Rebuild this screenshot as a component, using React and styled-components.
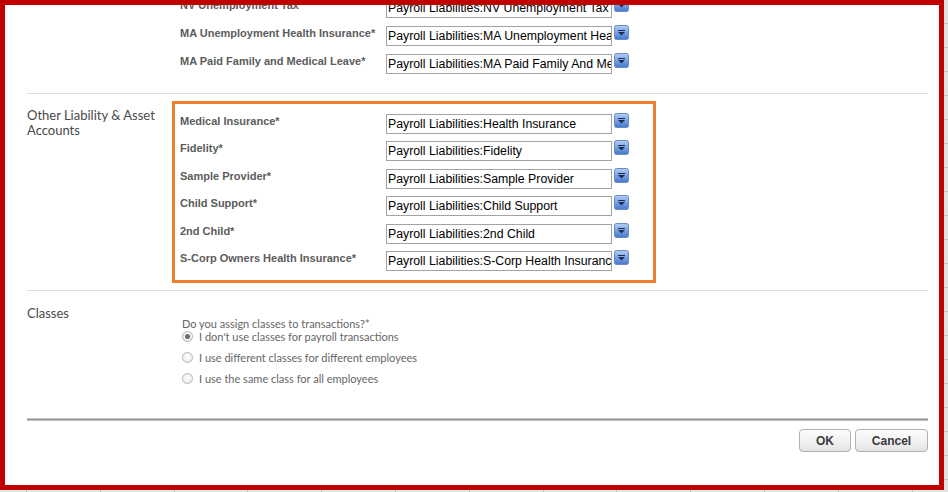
import styled, {createGlobalStyle} from "styled-components";

const GlobalStyle = createGlobalStyle`
  html, body {
    margin: 0;
    padding: 0;
  }

  body {
    width: 948px;
    height: 492px;
    overflow: hidden;
    font-family: "Liberation Sans", Arial, sans-serif;
    background-color: #e2e2e2;
    background-image:
      repeating-linear-gradient(90deg, transparent 0 26px, #b9b9b9 26px 27px, transparent 27px 73.8px),
      repeating-linear-gradient(180deg, transparent 0 23px, #c4c4c4 23px 24px);
  }
`

const Frame = styled.div`
  box-sizing: border-box;
  width: 944px;
  height: 490px;
  border: 5px solid #c00000;
  background: #fff;
  overflow: hidden;
`

const Content = styled.div`
  margin-top: -26.7px;
  padding: 0 11px 0 22px;
`

const Section = styled.div`
  display: grid;
  grid-template-columns: 145px 1fr;
  padding: 7px 0 ${props => props.$bottom || 7}px;
  border-bottom: ${props => props.$plain ? 'none' : '1px solid #dcdcdc'};
`

const SectionTitle = styled.div`
  font-family: Lato, "Open Sans", sans-serif;
  font-size: 13px;
  line-height: 15px;
  color: #4a4a4a;
  padding-top: 7.5px;
`

const FieldBox = styled.div`
  box-sizing: border-box;
  width: 484px;
  border: 3px solid ${props => props.$highlight ? '#ed7d31' : 'transparent'};
  padding: 10px 0 9px 5px;
  display: flex;
  flex-direction: column;
  gap: 7.6px;
`

const FieldRow = styled.div`
  display: flex;
  align-items: flex-start;
  height: 20px;
`

const FieldLabel = styled.div`
  width: 206px;
  flex-shrink: 0;
  font-size: 11px;
  font-weight: bold;
  line-height: 14px;
  color: #5c5c5c;
  white-space: nowrap;
`

const AccountBox = styled.div`
  box-sizing: border-box;
  width: 226px;
  height: 20px;
  border: 1px solid #a3a3a3;
  padding: 0 1px;
  font-size: 12.3px;
  line-height: 19px;
  color: #000;
  white-space: nowrap;
  overflow: hidden;
`

const ComboButton = styled.svg`
  width: 15px;
  height: 15px;
  margin: -1px 0 0 2px;
  flex-shrink: 0;
`

const ClassesBody = styled.div`
  padding: 18.5px 0 0 10px;
  font-family: Lato, "Open Sans", sans-serif;
  font-size: 11px;
  color: #666;
`

const Question = styled.div`
  line-height: 13px;
`

const RadioList = styled.div`
  display: flex;
  flex-direction: column;
  gap: 8px;
`

const RadioRow = styled.label`
  display: flex;
  align-items: center;
  gap: 6px;
  height: 13px;
  line-height: 13px;
`

const RadioDot = styled.span`
  box-sizing: border-box;
  width: 11px;
  height: 11px;
  border-radius: 50%;
  border: 1px solid #b3b3b3;
  background: radial-gradient(circle at 50% 40%, #fff 0%, #e6e6e6 100%);
  display: flex;
  align-items: center;
  justify-content: center;

  &::after {
    content: "";
    width: 5px;
    height: 5px;
    border-radius: 50%;
    background: ${props => props.$checked ? '#6a6a6a' : 'transparent'};
  }
`

const Rule = styled.div`
  height: 3px;
  background: linear-gradient(180deg, #d4d4d4 0%, #999 50%, #d4d4d4 100%);
`

const ButtonBar = styled.div`
  display: flex;
  justify-content: flex-end;
  gap: 4px;
  padding-top: 8px;
`

const Button = styled.button`
  box-sizing: border-box;
  width: ${props => props.$width}px;
  height: 23px;
  border: 1px solid #b1b1b1;
  border-radius: 4px;
  background: linear-gradient(180deg, #fdfdfd 0%, #f1f1f1 55%, #e3e3e3 100%);
  font-family: "Liberation Sans", Arial, sans-serif;
  font-size: 12px;
  font-weight: bold;
  color: #3a3a3a;
  padding: 0;
`

const topFields = [
  ['NV Unemployment Tax*', 'Payroll Liabilities:NV Unemployment Tax'],
  ['MA Unemployment Health Insurance*', 'Payroll Liabilities:MA Unemployment Health Insurance'],
  ['MA Paid Family and Medical Leave*', 'Payroll Liabilities:MA Paid Family And Medical Leave'],
]

const otherFields = [
  ['Medical Insurance*', 'Payroll Liabilities:Health Insurance'],
  ['Fidelity*', 'Payroll Liabilities:Fidelity'],
  ['Sample Provider*', 'Payroll Liabilities:Sample Provider'],
  ['Child Support*', 'Payroll Liabilities:Child Support'],
  ['2nd Child*', 'Payroll Liabilities:2nd Child'],
  ['S-Corp Owners Health Insurance*', 'Payroll Liabilities:S-Corp Health Insurance'],
]

const classOptions = [
  ["I don't use classes for payroll transactions", true],
  ['I use different classes for different employees', false],
  ['I use the same class for all employees', false],
]

const DropIcon = () => (
  <ComboButton viewBox="0 0 15 15">
    <defs>
      <linearGradient id="combo" x1="0" y1="0" x2="0" y2="1">
        <stop offset="0" stopColor="#b3cdf4"/>
        <stop offset="0.5" stopColor="#7aa3e4"/>
        <stop offset="1" stopColor="#4576cc"/>
      </linearGradient>
    </defs>
    <rect x="0.5" y="0.5" width="14" height="14" rx="2" fill="url(#combo)" stroke="#6a8cc4"/>
    <rect x="4" y="5" width="7" height="1" fill="#1b2d52"/>
    <path d="M4 7 H11 L7.5 10.5 Z" fill="#1b2d52"/>
  </ComboButton>
)

const FieldList = ({fields, highlight}) => (
  <FieldBox $highlight={highlight}>
    {fields.map(([label, value]) => (
      <FieldRow key={label}>
        <FieldLabel>{label}</FieldLabel>
        <AccountBox>{value}</AccountBox>
        <DropIcon/>
      </FieldRow>
    ))}
  </FieldBox>
)

export default function App() {
  return (
    <>
      <GlobalStyle/>
      <Frame>
        <Content>
          <Section>
            <div/>
            <FieldList fields={topFields}/>
          </Section>

          <Section>
            <SectionTitle>Other Liability &amp; Asset Accounts</SectionTitle>
            <FieldList fields={otherFields} highlight/>
          </Section>

          <Section $plain $bottom={33.5}>
            <SectionTitle>Classes</SectionTitle>
            <ClassesBody>
              <Question>Do you assign classes to transactions?*</Question>
              <RadioList>
                {classOptions.map(([text, checked]) => (
                  <RadioRow key={text}>
                    <RadioDot $checked={checked}/>
                    {text}
                  </RadioRow>
                ))}
              </RadioList>
            </ClassesBody>
          </Section>

          <Rule/>
          <ButtonBar>
            <Button $width={52}>OK</Button>
            <Button $width={73}>Cancel</Button>
          </ButtonBar>
        </Content>
      </Frame>
    </>
  )
}
